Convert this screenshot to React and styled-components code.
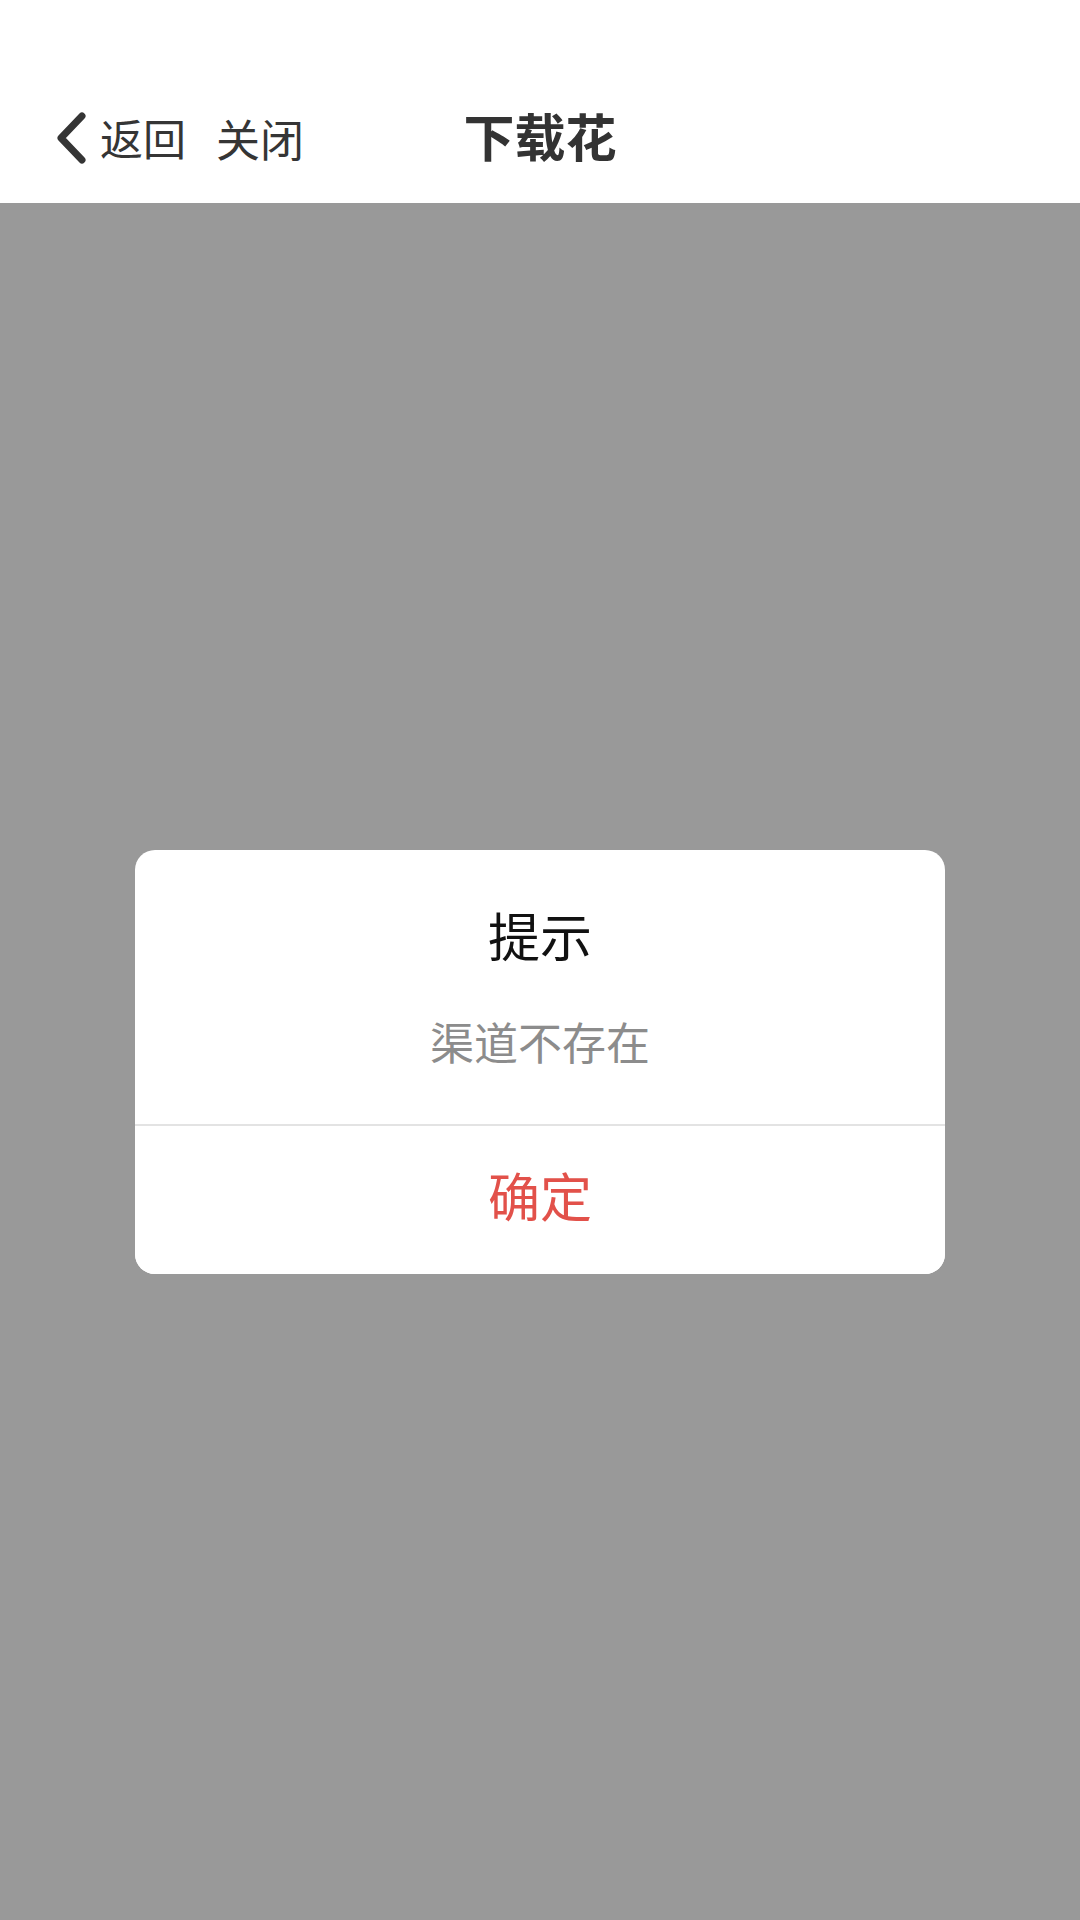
import React from "react";
import styled, { createGlobalStyle } from "styled-components";

const GlobalStyle = createGlobalStyle`
  html, body { margin: 0; padding: 0; }
  body {
    font-family: "Noto Sans CJK SC", "Noto Sans", sans-serif;
    background: #999999;
  }
  * { box-sizing: border-box; }
`;

const Page = styled.div`
  width: 1080px;
  min-height: 1920px;
  display: flex;
  flex-direction: column;
  background: #999999;
`;

const Header = styled.header`
  height: 203px;
  padding-top: 72px;
  background: #ffffff;
`;

const NavBar = styled.nav`
  height: 131px;
  display: grid;
  grid-template-columns: 1fr auto 1fr;
  align-items: center;
`;

const NavLeft = styled.div`
  display: flex;
  align-items: center;
  padding-left: 56px;
`;

const BackButton = styled.button`
  display: flex;
  align-items: center;
  gap: 14px;
  padding: 0;
  border: 0;
  background: none;
  color: #353535;
  font-family: inherit;
  font-size: 43px;
  line-height: 1;
`;

const NavLink = styled.button`
  margin-left: 30px;
  padding: 0;
  border: 0;
  background: none;
  color: #353535;
  font-family: inherit;
  font-size: 44px;
  line-height: 1;
`;

const NavTitle = styled.h1`
  margin: 0 0 4px;
  font-size: 51px;
  font-weight: 700;
  color: #333333;
  line-height: 1;
`;

const Body = styled.main`
  flex: 1;
  display: flex;
  align-items: center;
  justify-content: center;
`;

const Dialog = styled.div`
  width: 810px;
  background: #ffffff;
  border-radius: 20px;
  overflow: hidden;
  text-align: center;
`;

const DialogBody = styled.div`
  padding: 57px 40px 53px;
  border-bottom: 2px solid #e3e3e3;
`;

const DialogTitle = styled.div`
  font-size: 52px;
  line-height: 56px;
  color: #111111;
`;

const DialogMessage = styled.div`
  margin-top: 48px;
  font-size: 44px;
  line-height: 60px;
  color: #8c8c8c;
`;

const DialogButton = styled.button`
  display: block;
  width: 100%;
  height: 148px;
  padding: 0 0 10px;
  border: 0;
  background: #ffffff;
  font-family: inherit;
  font-size: 52px;
  color: #e2514a;
`;

const Chevron = () => (
  <svg width="30" height="52" viewBox="0 0 30 52">
    <polyline
      points="26,4 5,26 26,48"
      fill="none"
      stroke="#353535"
      strokeWidth="7"
      strokeLinecap="round"
      strokeLinejoin="round"
    />
  </svg>
);

export default function App() {
  return (
    <>
      <GlobalStyle />
      <Page>
        <Header>
          <NavBar>
            <NavLeft>
              <BackButton>
                <Chevron />
                返回
              </BackButton>
              <NavLink>关闭</NavLink>
            </NavLeft>
            <NavTitle>下载花</NavTitle>
            <div />
          </NavBar>
        </Header>
        <Body>
          <Dialog>
            <DialogBody>
              <DialogTitle>提示</DialogTitle>
              <DialogMessage>渠道不存在</DialogMessage>
            </DialogBody>
            <DialogButton>确定</DialogButton>
          </Dialog>
        </Body>
      </Page>
    </>
  );
}
